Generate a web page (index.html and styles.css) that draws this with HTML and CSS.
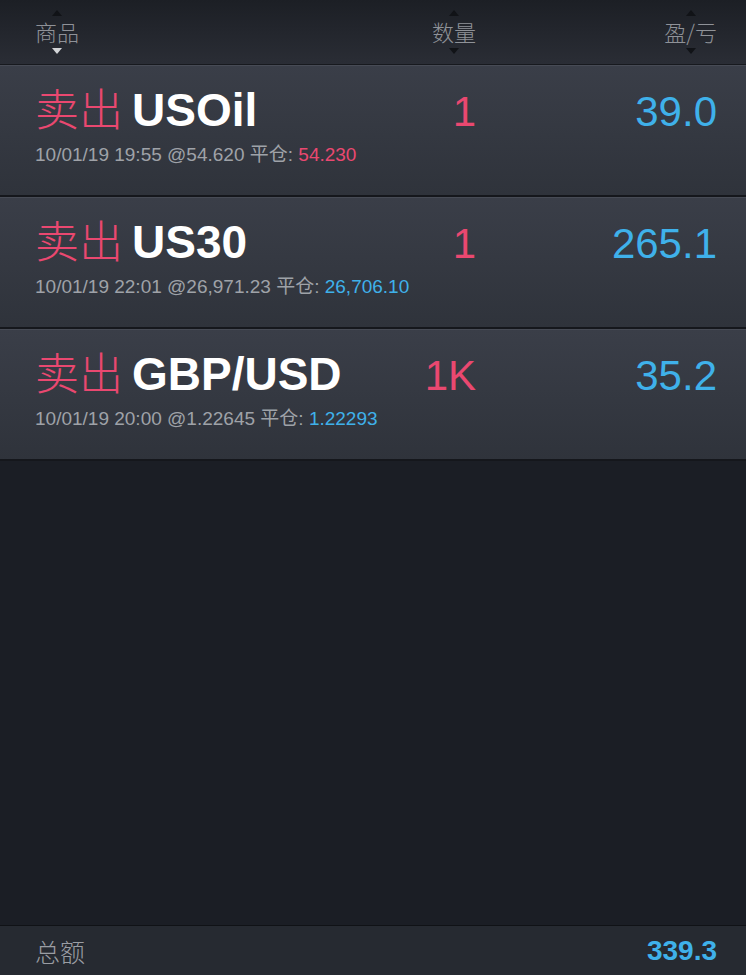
FILE: index.html
```html
<!DOCTYPE html>
<html lang="zh-CN">
<head>
	<meta charset="UTF-8">
	<title>持仓</title>
	<link rel="stylesheet" href="styles.css">
</head>
<body>
	<div class="page">
		<div class="head">
			<div class="sort sort-name">
				<span class="arr up"></span>
				<span class="label">商品</span>
				<span class="arr down on"></span>
			</div>
			<div class="sort sort-qty">
				<span class="arr up"></span>
				<span class="label">数量</span>
				<span class="arr down"></span>
			</div>
			<div class="sort sort-pl">
				<span class="arr up"></span>
				<span class="label">盈/亏</span>
				<span class="arr down"></span>
			</div>
		</div>

		<ul class="list">
			<li class="row">
				<div class="title"><span class="side">卖出</span><span class="sym">USOil</span></div>
				<div class="qty">1</div>
				<div class="pl">39.0</div>
				<div class="info">10/01/19 19:55 @54.620 平仓: <span class="red">54.230</span></div>
			</li>
			<li class="row">
				<div class="title"><span class="side">卖出</span><span class="sym">US30</span></div>
				<div class="qty">1</div>
				<div class="pl">265.1</div>
				<div class="info">10/01/19 22:01 @26,971.23 平仓: <span class="blue">26,706.10</span></div>
			</li>
			<li class="row">
				<div class="title"><span class="side">卖出</span><span class="sym">GBP/USD</span></div>
				<div class="qty">1K</div>
				<div class="pl">35.2</div>
				<div class="info">10/01/19 20:00 @1.22645 平仓: <span class="blue">1.22293</span></div>
			</li>
		</ul>

		<div class="foot">
			<span class="foot-label">总额</span>
			<span class="foot-total">339.3</span>
		</div>
	</div>
</body>
</html>
```

FILE: styles.css
```css
*{
	margin: 0;
	padding: 0;
	box-sizing: border-box;
}
body{
	background-color: #1b1e25;
	font-family: "Liberation Sans", "Noto Sans CJK SC", sans-serif;
}
.page{
	height: 975px;
	display: flex;
	flex-direction: column;
}

/* 表头 */
.head{
	height: 65px;
	border-bottom: 1px solid #17191e;
	background: linear-gradient(#1c1f25, #2a2d35);
	display: grid;
	grid-template-columns: 1fr 100px 241px;
	padding: 0 29px 0 35px;
}
.sort{
	display: flex;
	flex-direction: column;
	align-items: center;
	padding-top: 10px;
}
.sort-name{
	justify-self: start;
}
.sort-qty, .sort-pl{
	justify-self: end;
}
.sort .label{
	font-family: "Noto Sans CJK SC", sans-serif;
	font-weight: 300;
	font-size: 22px;
	line-height: 30px;
	color: #8f9298;
	margin: 0 0 2px;
}
.arr{
	width: 0;
	height: 0;
	border-left: 5px solid transparent;
	border-right: 5px solid transparent;
}
.arr.up{
	border-bottom: 6px solid #111317;
}
.arr.down{
	border-top: 6px solid #111317;
}
.arr.down.on{
	border-top-color: #d3d5d8;
}

/* 列表 */
.list{
	list-style: none;
	flex: 1;
}
.row{
	border-top: 1px solid #474b55;
	border-bottom: 2px solid #15171c;
	height: 132px;
	background: linear-gradient(#3a3e48, #2f333b);
	display: grid;
	grid-template-columns: 1fr 100px 241px;
	grid-template-rows: auto auto;
	align-items: baseline;
	align-content: start;
	padding: 19px 29px 0 35px;
}
.title{
	display: flex;
	align-items: baseline;
}
.side{
	font-family: "Noto Sans CJK SC", sans-serif;
	font-weight: 300;
	font-size: 44px;
	line-height: 1;
	color: #ea4870;
	margin-right: 9px;
}
.sym{
	font-size: 46px;
	font-weight: bold;
	line-height: 1;
	color: #fff;
}
.qty{
	text-align: right;
	font-size: 42px;
	line-height: 1;
	color: #ea4870;
}
.pl{
	text-align: right;
	font-size: 42px;
	line-height: 1;
	color: #3fb1ea;
}
.info{
	grid-column: 1 / 4;
	margin-top: 11px;
	font-size: 19px;
	line-height: 22px;
	color: #9fa2a8;
}
.red{
	color: #ea4870;
}
.blue{
	color: #3fb1ea;
}

/* 底部 */
.foot{
	height: 50px;
	border-top: 1px solid #101216;
	background-color: #262a31;
	display: flex;
	justify-content: space-between;
	align-items: center;
	padding: 0 29px 0 35px;
}
.foot-label{
	font-family: "Noto Sans CJK SC", sans-serif;
	font-weight: 300;
	font-size: 25px;
	color: #9a9da3;
}
.foot-total{
	font-size: 28px;
	font-weight: bold;
	color: #3fb1ea;
}
```
